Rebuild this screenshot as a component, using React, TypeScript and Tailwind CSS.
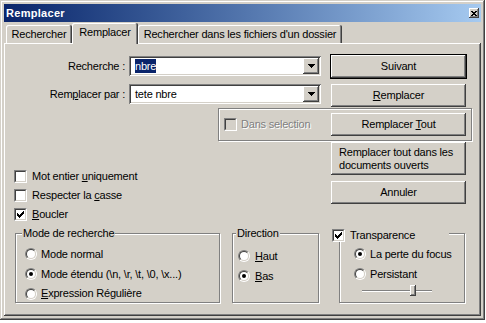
const raised = "bg-[#d4d0c8] shadow-[inset_-1px_-1px_#404040,inset_1px_1px_#fff,inset_-2px_-2px_#808080]";
const sunken = "shadow-[inset_1px_1px_#808080,inset_-1px_-1px_#fff,inset_2px_2px_#404040,inset_-2px_-2px_#d4d0c8]";

const checkPixels: [number, number, number][] = [
  [6, 0, 1],
  [5, 1, 2],
  [0, 2, 1],
  [4, 2, 3],
  [0, 3, 2],
  [3, 3, 3],
  [0, 4, 5],
  [1, 5, 3],
  [2, 6, 1],
];

function Check({ checked = false, disabled = false }: { checked?: boolean; disabled?: boolean }) {
  return (
    <div className="w-[13px] h-[13px] shrink-0 border border-t-[#808080] border-l-[#808080] border-b-white border-r-white">
      <div
        className={`w-full h-full border border-t-[#404040] border-l-[#404040] border-b-[#d4d0c8] border-r-[#d4d0c8] ${
          disabled ? "bg-[#d4d0c8]" : "bg-white"
        }`}
      >
        {checked && (
          <svg width="9" height="9" viewBox="0 0 9 9" shapeRendering="crispEdges">
            {checkPixels.map(([x, y, w]) => (
              <rect key={`${x}-${y}`} x={x + 1} y={y + 1} width={w} height={1} fill="#000" />
            ))}
          </svg>
        )}
      </div>
    </div>
  );
}

function Radio({ checked = false }: { checked?: boolean }) {
  return (
    <div className="w-[12px] h-[12px] shrink-0 rounded-full border border-t-[#808080] border-l-[#808080] border-b-white border-r-white">
      <div className="w-full h-full rounded-full border border-t-[#404040] border-l-[#404040] border-b-[#d4d0c8] border-r-[#d4d0c8] bg-white flex items-center justify-center">
        {checked && <div className="w-[4px] h-[4px] rounded-full bg-black" />}
      </div>
    </div>
  );
}

function Btn({ children, className = "" }: { children: React.ReactNode; className?: string }) {
  return (
    <div className={`w-[135px] h-[23px] flex items-center justify-center ${raised} ${className}`}>{children}</div>
  );
}

function Combo({ children, className = "" }: { children: React.ReactNode; className?: string }) {
  return (
    <div className={`w-[192px] h-[20px] bg-white flex items-center pl-[6px] pr-[2px] ${sunken} ${className}`}>
      <div className="flex-1 flex items-center">{children}</div>
      <div className={`w-[16px] h-[16px] flex items-center justify-center ${raised}`}>
        <svg width="7" height="4" viewBox="0 0 7 4" shapeRendering="crispEdges">
          <rect x="0" y="0" width="7" height="1" fill="#000" />
          <rect x="1" y="1" width="5" height="1" fill="#000" />
          <rect x="2" y="2" width="3" height="1" fill="#000" />
          <rect x="3" y="3" width="1" height="1" fill="#000" />
        </svg>
      </div>
    </div>
  );
}

function Group({
  legend,
  legendClass,
  className,
  children,
}: {
  legend: React.ReactNode;
  legendClass: string;
  className: string;
  children: React.ReactNode;
}) {
  return (
    <div className={`relative border border-[#808080] shadow-[1px_1px_#fff,inset_1px_1px_#fff] ${className}`}>
      <div className={`absolute bg-[#d4d0c8] leading-[13px] ${legendClass}`}>{legend}</div>
      {children}
    </div>
  );
}

function Tab({ children, selected = false, w }: { children: React.ReactNode; selected?: boolean; w: string }) {
  return (
    <div
      className={`${w} flex items-center justify-center rounded-t-[2px] bg-[#d4d0c8] shadow-[inset_-1px_0_#404040,inset_1px_1px_#fff,inset_-2px_0_#808080] ${
        selected ? "h-[21px] -mb-[1px] relative z-10 pb-[2px]" : "h-[18px]"
      }`}
    >
      {children}
    </div>
  );
}

export default function App() {
  return (
    <div className="w-[486px] h-[323px] bg-white font-['Liberation_Sans',Arial,sans-serif] text-[11px] leading-[13px] tracking-[-0.2px] text-black">
      <div className="w-[485px] h-[320px] bg-[#d4d0c8] p-[4px] flex flex-col shadow-[inset_-1px_-1px_#404040,inset_1px_1px_#d4d0c8,inset_-2px_-2px_#808080,inset_2px_2px_#fff]">
        {/* title bar */}
        <div className="h-[18px] flex items-center bg-linear-to-r from-[#0a246a] to-[#a6caf0] pl-[2px] pr-[2px]">
          <span className="text-white font-bold text-[11px] tracking-[0.3px]">Remplacer</span>
          <div className={`ml-auto w-[10px] h-[10px] flex items-center justify-center ${raised}`}>
            <svg width="6" height="5" viewBox="0 0 6 5" shapeRendering="crispEdges">
              <rect x="0" y="0" width="2" height="1" fill="#000" />
              <rect x="4" y="0" width="2" height="1" fill="#000" />
              <rect x="1" y="1" width="4" height="1" fill="#000" />
              <rect x="2" y="2" width="2" height="1" fill="#000" />
              <rect x="1" y="3" width="4" height="1" fill="#000" />
              <rect x="0" y="4" width="2" height="1" fill="#000" />
              <rect x="4" y="4" width="2" height="1" fill="#000" />
            </svg>
          </div>
        </div>

        {/* tabs */}
        <div className="mt-[1px] h-[20px] flex items-end pl-[2px]">
          <Tab w="w-[66px]">Rechercher</Tab>
          <Tab w="w-[66px]" selected>
            Remplacer
          </Tab>
          <Tab w="w-[204px]">Rechercher dans les fichiers d'un dossier</Tab>
        </div>

        {/* panel */}
        <div className="flex-1 flex flex-col shadow-[inset_-1px_-1px_#404040,inset_1px_1px_#fff,inset_-2px_-2px_#808080]">
          {/* Recherche */}
          <div className="mt-[11px] flex h-[25px]">
            <div className="w-[121px] h-[25px] flex items-center justify-end">Recherche :</div>
            <Combo className="ml-[4px] mt-[2px]">
              <span className="h-[14px] leading-[14px] bg-[#0a246a] text-white">nbre</span>
            </Combo>
            <div className="ml-[9px] border border-black">
              <Btn>Suivant</Btn>
            </div>
          </div>

          {/* Remplacer par */}
          <div className="mt-[5px] flex h-[23px]">
            <div className="w-[121px] h-[20px] flex items-center justify-end">
              <span>
                Rem<u>p</u>lacer par :
              </span>
            </div>
            <Combo className="ml-[4px]">
              <span>tete nbre</span>
            </Combo>
            <Btn className="ml-[10px]">
              <span>
                <u>R</u>emplacer
              </span>
            </Btn>
          </div>

          {/* Dans selection */}
          <div className="mt-[1px] flex">
            <div className="ml-[214px] w-[254px] h-[33px] flex items-center pl-[5px] border border-[#808080] shadow-[1px_1px_#fff,inset_1px_1px_#fff]">
              <Check disabled />
              <span className="ml-[4px] text-[#808080] [text-shadow:1px_1px_#fff]">Dans selection</span>
              <Btn className="ml-auto mr-[5px]">
                <span>
                  Remplacer <u>T</u>out
                </span>
              </Btn>
            </div>
          </div>

          {/* options + buttons */}
          <div className="mt-[1px] flex h-[82px]">
            <div className="w-[327px] pl-[10px] pt-[25px] flex flex-col">
              <div className="h-[19px] flex items-center">
                <Check />
                <span className="ml-[5px]">
                  Mot entier <u>u</u>niquement
                </span>
              </div>
              <div className="h-[19px] flex items-center">
                <Check />
                <span className="ml-[5px]">
                  Respecter la <u>c</u>asse
                </span>
              </div>
              <div className="h-[19px] flex items-center">
                <Check checked />
                <span className="ml-[5px]">
                  <u>B</u>oucler
                </span>
              </div>
            </div>
            <div className="flex flex-col">
              <div className={`w-[135px] h-[33px] flex items-center pl-[8px] ${raised}`}>
                <span>
                  Remplacer tout dans les
                  <br />
                  documents ouverts
                </span>
              </div>
              <Btn className="mt-[6px]">Annuler</Btn>
            </div>
          </div>

          {/* group boxes */}
          <div className="mt-[9px] flex">
            <Group
              className="ml-[11px] w-[205px] h-[70px] pl-[9px] pt-[10px]"
              legendClass="left-[6px] top-[-7px] px-[1px]"
              legend="Mode de recherche"
            >
              <div className="h-[20px] flex items-center">
                <Radio />
                <span className="ml-[4px]">Mode normal</span>
              </div>
              <div className="h-[20px] flex items-center">
                <Radio checked />
                <span className="ml-[4px]">Mode étendu (\n, \r, \t, \0, \x...)</span>
              </div>
              <div className="h-[19px] flex items-center">
                <Radio />
                <span className="ml-[4px]">
                  <u>E</u>xpression Régulière
                </span>
              </div>
            </Group>

            <Group
              className="ml-[12px] w-[87px] h-[70px] pl-[5px] pt-[12px]"
              legendClass="left-[3px] top-[-7px] px-[1px]"
              legend="Direction"
            >
              <div className="h-[20px] flex items-center">
                <Radio />
                <span className="ml-[5px]">
                  <u>H</u>aut
                </span>
              </div>
              <div className="h-[20px] flex items-center">
                <Radio checked />
                <span className="ml-[5px]">
                  <u>B</u>as
                </span>
              </div>
            </Group>

            <Group
              className="ml-[20px] w-[126px] h-[70px] pl-[14px] pt-[10px]"
              legendClass="left-[-8px] top-[-5px] w-[117px] h-[13px] flex items-center"
              legend={
                <>
                  <Check checked />
                  <span className="ml-[5px]">Transparence</span>
                </>
              }
            >
              <div className="h-[20px] flex items-center">
                <Radio checked />
                <span className="ml-[4px]">La perte du focus</span>
              </div>
              <div className="h-[20px] flex items-center">
                <Radio />
                <span className="ml-[4px]">Persistant</span>
              </div>
              <div className="relative ml-[8px] mt-[1px] w-[70px] h-[11px] flex items-center">
                <div className="w-full h-[2px] border-t border-t-[#808080] border-b border-b-white" />
                <div className={`absolute left-[48px] top-0 w-[6px] h-[11px] ${raised}`} />
              </div>
            </Group>
          </div>
        </div>
      </div>
    </div>
  );
}
